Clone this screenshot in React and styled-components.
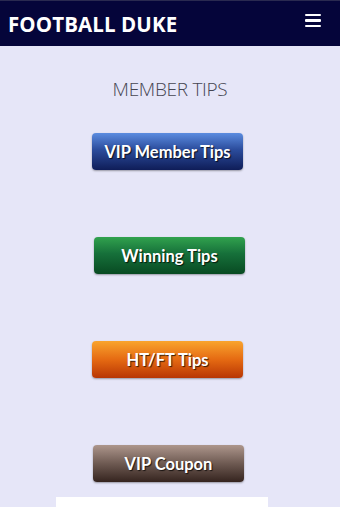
import React from "react";
import styled, { createGlobalStyle } from "styled-components";

const Global = createGlobalStyle`
  html, body { margin: 0; padding: 0; background: #e6e6f8; }
  body { font-family: "Open Sans", "Liberation Sans", sans-serif; overflow: hidden; }
`;

const Page = styled.div`
  width: 340px;
  height: 507px;
  background: #e6e6f8;
  overflow: hidden;
`;

const Header = styled.header`
  height: 46px;
  background: #05053a;
  border-top: 1px solid #2a2a50;
  box-sizing: border-box;
  display: flex;
  align-items: center;
  justify-content: space-between;
  padding: 0 19px 0 8px;
`;

const Brand = styled.div`
  color: #fff;
  font-family: "Open Sans", sans-serif;
  font-weight: 700;
  font-size: 20.5px;
  letter-spacing: 0.1px;
  line-height: 24px;
  margin-top: 1px;
`;

const Burger = styled.div`
  width: 16px;
  display: flex;
  flex-direction: column;
  gap: 3px;
  margin-top: -6px;
`;

const Bar = styled.span`
  display: block;
  height: 2.5px;
  background: #fff;
  border-radius: 1px;
`;

const Main = styled.main`
  display: flex;
  flex-direction: column;
  padding-top: 31px;
`;

const Heading = styled.h2`
  margin: 0;
  text-align: center;
  font-family: "Open Sans", sans-serif;
  font-weight: 300;
  font-size: 19px;
  line-height: 24px;
  color: #454552;
  letter-spacing: -0.3px;
`;

const ButtonList = styled.div`
  display: flex;
  flex-direction: column;
  gap: 67px;
  margin-top: 32px;
  padding-left: 92px;
`;

const themes = {
  blue: "linear-gradient(#5b8ce0, #2b4c9c 45%, #0f1d58)",
  green: "linear-gradient(#31a24e, #16703a 45%, #084a22)",
  orange: "linear-gradient(#f9a42e, #e56a12 50%, #b83604)",
  brown: "linear-gradient(#ad968c, #6e5a52 50%, #35241f)",
};

const TipButton = styled.a`
  width: 151px;
  height: 37px;
  margin-left: ${(p) => p.$shift || 0}px;
  box-sizing: border-box;
  display: flex;
  align-items: center;
  justify-content: center;
  border-radius: 4px;
  background: ${(p) => themes[p.$tone]};
  box-shadow: 0 1px 2px rgba(0, 0, 0, 0.35);
  color: #fff;
  font-family: "Lato", "Open Sans", sans-serif;
  font-weight: 700;
  font-size: 16.5px;
  text-decoration: none;
  text-shadow: 1px 1px 1px rgba(0, 0, 0, 0.75);
`;

const WhiteBox = styled.div`
  width: 212px;
  height: 40px;
  background: #fff;
  margin: 15px 0 0 56px;
`;

export default function App() {
  return (
    <Page>
      <Global />
      <Header>
        <Brand>FOOTBALL DUKE</Brand>
        <Burger>
          <Bar />
          <Bar />
          <Bar />
        </Burger>
      </Header>
      <Main>
        <Heading>MEMBER TIPS</Heading>
        <ButtonList>
          <TipButton $tone="blue">VIP Member Tips</TipButton>
          <TipButton $tone="green" $shift={2}>Winning Tips</TipButton>
          <TipButton $tone="orange">HT/FT Tips</TipButton>
          <TipButton $tone="brown" $shift={1}>VIP Coupon</TipButton>
        </ButtonList>
        <WhiteBox />
      </Main>
    </Page>
  );
}
